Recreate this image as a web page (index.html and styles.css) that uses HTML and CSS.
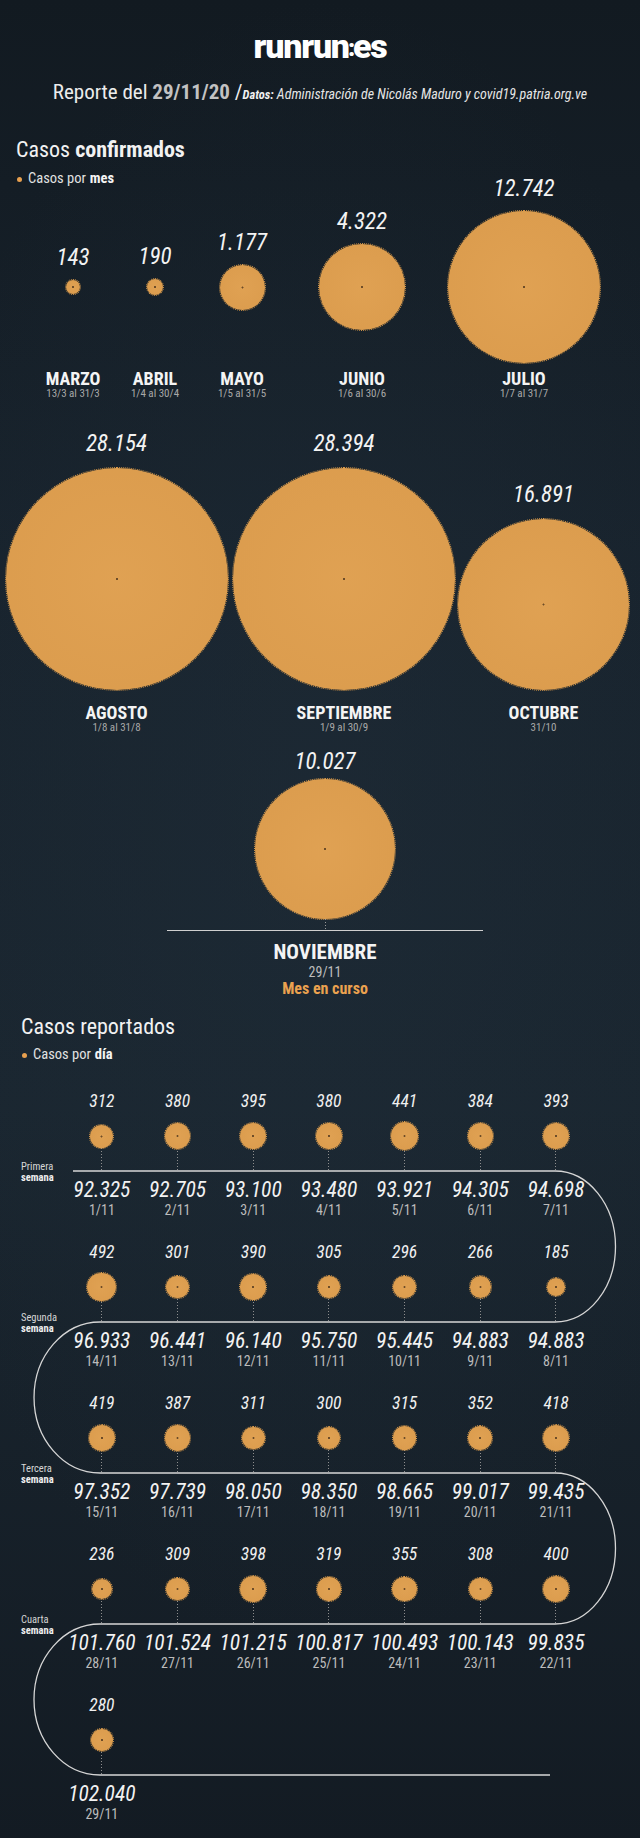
FILE: index.html
```html
<!DOCTYPE html>
<html lang="es">
<head>
<meta charset="utf-8">
<title>Casos confirmados</title>
<link rel="stylesheet" href="styles.css">
</head>
<body>
<header class="top">
  <div class="logo">runrun<span class="colon">:</span>es</div>
  <p class="report">Reporte del <b>29/11/20</b> <span class="slash">/</span><span class="src"><b>Datos:</b> Administración de Nicolás Maduro y covid19.patria.org.ve</span></p>
</header>

<section class="conf">
  <h2 class="h2a">Casos <b>confirmados</b></h2>
  <p class="legend la"><i class="dot"></i>Casos por <b>mes</b></p>

  <div class="mrow r1">
    <div class="mcol"><div class="stage"><span class="num">143</span><span class="circ" style="--d:14px"></span></div><div class="mname">MARZO</div><div class="mdate">13/3 al 31/3</div></div>
    <div class="mcol"><div class="stage"><span class="num">190</span><span class="circ" style="--d:16px"></span></div><div class="mname">ABRIL</div><div class="mdate">1/4 al 30/4</div></div>
    <div class="mcol"><div class="stage"><span class="num">1.177</span><span class="circ" style="--d:45px"></span></div><div class="mname">MAYO</div><div class="mdate">1/5 al 31/5</div></div>
    <div class="mcol"><div class="stage"><span class="num">4.322</span><span class="circ" style="--d:86px"></span></div><div class="mname">JUNIO</div><div class="mdate">1/6 al 30/6</div></div>
    <div class="mcol"><div class="stage"><span class="num">12.742</span><span class="circ" style="--d:152px"></span></div><div class="mname">JULIO</div><div class="mdate">1/7 al 31/7</div></div>
  </div>

  <div class="mrow r2">
    <div class="mcol"><div class="stage"><span class="num">28.154</span><span class="circ" style="--d:222px"></span></div><div class="mname">AGOSTO</div><div class="mdate">1/8 al 31/8</div></div>
    <div class="mcol"><div class="stage"><span class="num">28.394</span><span class="circ" style="--d:222px"></span></div><div class="mname">SEPTIEMBRE</div><div class="mdate">1/9 al 30/9</div></div>
    <div class="mcol"><div class="stage"><span class="num">16.891</span><span class="circ" style="--d:171px"></span></div><div class="mname">OCTUBRE</div><div class="mdate">31/10</div></div>
  </div>

  <div class="nov">
    <span class="num">10.027</span>
    <span class="circ" style="--d:140px"></span>
    <span class="stem"></span>
    <span class="hline"></span>
    <div class="nname">NOVIEMBRE</div>
    <div class="ndate">29/11</div>
    <div class="ncur">Mes en curso</div>
  </div>
</section>

<section class="rep">
  <h2 class="h2b">Casos reportados</h2>
  <p class="legend lb"><i class="dot"></i>Casos por <b>día</b></p>

  <div class="days">
    <svg class="track" width="640" height="760" viewBox="0 0 640 760" aria-hidden="true">
      <path d="M73 89 H555 A60.5 75.5 0 0 1 555 240 H100 A66 75.5 0 0 0 100 391 H555 A60.5 75.5 0 0 1 555 542 H100 A66 75.5 0 0 0 100 693 H550" />
    </svg>

    <div class="week">
      <div class="wlabel">Primera<br><b>semana</b></div>
      <div class="day"><span class="dnum">312</span><div class="dstage"><div class="cbox"><span class="circ" style="--d:23px"></span></div></div><span class="dval">92.325</span><span class="ddate">1/11</span></div>
      <div class="day"><span class="dnum">380</span><div class="dstage"><div class="cbox"><span class="circ" style="--d:25.3px"></span></div></div><span class="dval">92.705</span><span class="ddate">2/11</span></div>
      <div class="day"><span class="dnum">395</span><div class="dstage"><div class="cbox"><span class="circ" style="--d:25.8px"></span></div></div><span class="dval">93.100</span><span class="ddate">3/11</span></div>
      <div class="day"><span class="dnum">380</span><div class="dstage"><div class="cbox"><span class="circ" style="--d:25.3px"></span></div></div><span class="dval">93.480</span><span class="ddate">4/11</span></div>
      <div class="day"><span class="dnum">441</span><div class="dstage"><div class="cbox"><span class="circ" style="--d:27.3px"></span></div></div><span class="dval">93.921</span><span class="ddate">5/11</span></div>
      <div class="day"><span class="dnum">384</span><div class="dstage"><div class="cbox"><span class="circ" style="--d:25.5px"></span></div></div><span class="dval">94.305</span><span class="ddate">6/11</span></div>
      <div class="day"><span class="dnum">393</span><div class="dstage"><div class="cbox"><span class="circ" style="--d:25.8px"></span></div></div><span class="dval">94.698</span><span class="ddate">7/11</span></div>
    </div>

    <div class="week">
      <div class="wlabel">Segunda<br><b>semana</b></div>
      <div class="day"><span class="dnum">492</span><div class="dstage"><div class="cbox"><span class="circ" style="--d:28.8px"></span></div></div><span class="dval">96.933</span><span class="ddate">14/11</span></div>
      <div class="day"><span class="dnum">301</span><div class="dstage"><div class="cbox"><span class="circ" style="--d:22.6px"></span></div></div><span class="dval">96.441</span><span class="ddate">13/11</span></div>
      <div class="day"><span class="dnum">390</span><div class="dstage"><div class="cbox"><span class="circ" style="--d:25.7px"></span></div></div><span class="dval">96.140</span><span class="ddate">12/11</span></div>
      <div class="day"><span class="dnum">305</span><div class="dstage"><div class="cbox"><span class="circ" style="--d:22.7px"></span></div></div><span class="dval">95.750</span><span class="ddate">11/11</span></div>
      <div class="day"><span class="dnum">296</span><div class="dstage"><div class="cbox"><span class="circ" style="--d:22.4px"></span></div></div><span class="dval">95.445</span><span class="ddate">10/11</span></div>
      <div class="day"><span class="dnum">266</span><div class="dstage"><div class="cbox"><span class="circ" style="--d:21.2px"></span></div></div><span class="dval">94.883</span><span class="ddate">9/11</span></div>
      <div class="day"><span class="dnum">185</span><div class="dstage"><div class="cbox"><span class="circ" style="--d:17.7px"></span></div></div><span class="dval">94.883</span><span class="ddate">8/11</span></div>
    </div>

    <div class="week">
      <div class="wlabel">Tercera<br><b>semana</b></div>
      <div class="day"><span class="dnum">419</span><div class="dstage"><div class="cbox"><span class="circ" style="--d:26.6px"></span></div></div><span class="dval">97.352</span><span class="ddate">15/11</span></div>
      <div class="day"><span class="dnum">387</span><div class="dstage"><div class="cbox"><span class="circ" style="--d:25.6px"></span></div></div><span class="dval">97.739</span><span class="ddate">16/11</span></div>
      <div class="day"><span class="dnum">311</span><div class="dstage"><div class="cbox"><span class="circ" style="--d:22.9px"></span></div></div><span class="dval">98.050</span><span class="ddate">17/11</span></div>
      <div class="day"><span class="dnum">300</span><div class="dstage"><div class="cbox"><span class="circ" style="--d:22.5px"></span></div></div><span class="dval">98.350</span><span class="ddate">18/11</span></div>
      <div class="day"><span class="dnum">315</span><div class="dstage"><div class="cbox"><span class="circ" style="--d:23.1px"></span></div></div><span class="dval">98.665</span><span class="ddate">19/11</span></div>
      <div class="day"><span class="dnum">352</span><div class="dstage"><div class="cbox"><span class="circ" style="--d:24.4px"></span></div></div><span class="dval">99.017</span><span class="ddate">20/11</span></div>
      <div class="day"><span class="dnum">418</span><div class="dstage"><div class="cbox"><span class="circ" style="--d:26.6px"></span></div></div><span class="dval">99.435</span><span class="ddate">21/11</span></div>
    </div>

    <div class="week">
      <div class="wlabel">Cuarta<br><b>semana</b></div>
      <div class="day"><span class="dnum">236</span><div class="dstage"><div class="cbox"><span class="circ" style="--d:20px"></span></div></div><span class="dval">101.760</span><span class="ddate">28/11</span></div>
      <div class="day"><span class="dnum">309</span><div class="dstage"><div class="cbox"><span class="circ" style="--d:22.9px"></span></div></div><span class="dval">101.524</span><span class="ddate">27/11</span></div>
      <div class="day"><span class="dnum">398</span><div class="dstage"><div class="cbox"><span class="circ" style="--d:25.9px"></span></div></div><span class="dval">101.215</span><span class="ddate">26/11</span></div>
      <div class="day"><span class="dnum">319</span><div class="dstage"><div class="cbox"><span class="circ" style="--d:23.2px"></span></div></div><span class="dval">100.817</span><span class="ddate">25/11</span></div>
      <div class="day"><span class="dnum">355</span><div class="dstage"><div class="cbox"><span class="circ" style="--d:24.5px"></span></div></div><span class="dval">100.493</span><span class="ddate">24/11</span></div>
      <div class="day"><span class="dnum">308</span><div class="dstage"><div class="cbox"><span class="circ" style="--d:22.8px"></span></div></div><span class="dval">100.143</span><span class="ddate">23/11</span></div>
      <div class="day"><span class="dnum">400</span><div class="dstage"><div class="cbox"><span class="circ" style="--d:26px"></span></div></div><span class="dval">99.835</span><span class="ddate">22/11</span></div>
    </div>

    <div class="week">
      <div class="day"><span class="dnum">280</span><div class="dstage"><div class="cbox"><span class="circ" style="--d:21.8px"></span></div></div><span class="dval">102.040</span><span class="ddate">29/11</span></div>
    </div>
  </div>
</section>
</body>
</html>
```
FILE: styles.css
```css
* { box-sizing: border-box; margin: 0; padding: 0; }

html, body { width: 640px; }

body {
  min-height: 1838px;
  background-color: #17222b;
  background-image:
    radial-gradient(ellipse 70% 45% at 50% 45%, rgba(32, 46, 58, 0.45) 0%, rgba(23, 34, 43, 0) 100%),
    linear-gradient(180deg, #121a21 0%, #18232d 30%, #1a2630 60%, #131b23 100%);
  color: #f1f1f1;
  font-family: "Roboto Condensed", "Liberation Sans Narrow", "Arial Narrow", Roboto, sans-serif;
}

/* ---------- header ---------- */
.top { padding-top: 31px; text-align: center; }

.logo {
  font-family: Roboto, "Liberation Sans", sans-serif;
  font-weight: 900;
  font-size: 34px;
  line-height: 30px;
  letter-spacing: -1.2px;
  color: #ffffff;
}
.logo .colon { margin: 0 -1px 0 -1px; font-size: 24px; vertical-align: 2px; }

.report {
  margin-top: 17px;
  font-size: 21px;
  line-height: 24px;
  color: #ececec;
  white-space: nowrap;
}
.report b { color: #c2c2c2; font-weight: 700; }
.report .slash { color: #f0f0f0; }
.report .src { font-style: italic; font-size: 14px; color: #e6e6e6; }
.report .src b { color: #f0f0f0; font-size: 12.5px; }

/* ---------- headings ---------- */
h2 {
  font-size: 22px;
  line-height: 26px;
  font-weight: 400;
  color: #f2f2f2;
}
h2 b { font-weight: 700; }
.h2a { margin-top: 30px; padding-left: 16px; }
.h2b { margin-top: 16px; padding-left: 21px; }

.legend {
  font-size: 14.5px;
  line-height: 18px;
  color: #e2e2e2;
  display: flex;
  align-items: center;
}
.legend b { font-weight: 700; color: #f4f4f4; margin-left: 4px; }
.legend .dot {
  width: 5px; height: 5px; border-radius: 50%;
  background: #e8a04f;
  margin-right: 6px;
}
.la { margin-top: 7px; padding-left: 17px; }
.lb { margin-top: 6px; padding-left: 22px; }

/* ---------- bubbles ---------- */
.circ {
  display: block;
  flex-shrink: 0;
  width: var(--d);
  height: var(--d);
  border-radius: 50%;
  background-color: #dc9d4e;
  background-image:
    radial-gradient(circle, rgba(60, 40, 22, 0.7) 0 0.7px, rgba(0, 0, 0, 0) 1.3px),
    radial-gradient(circle, rgba(226, 164, 86, 0.6) 0%, rgba(216, 152, 74, 0.4) 100%);
  outline: 1px dotted #d99a4b;
  outline-offset: 0;
}

.num {
  display: block;
  flex-shrink: 0;
  font-size: 23px;
  line-height: 22px;
  font-style: italic;
  font-weight: 400;
  color: #f3f3f3;
  white-space: nowrap;
}

/* ---------- months ---------- */
.mrow { display: flex; }
.mcol { display: flex; flex-direction: column; align-items: center; flex-shrink: 0; }

.stage {
  display: flex;
  flex-direction: column;
  align-items: center;
  width: 100%;
}
.stage .num { margin-bottom: 11px; }

.r1 { margin-top: 16px; padding-left: 33px; }
.r1 .stage { height: 166px; justify-content: center; }
.r1 .stage::after { content: ""; display: block; flex-shrink: 0; height: 33px; }
.r1 .mcol:nth-child(1) { width: 80px; }
.r1 .mcol:nth-child(2) { width: 84px; }
.r1 .mcol:nth-child(3) { width: 90px; }
.r1 .mcol:nth-child(4) { width: 150px; }
.r1 .mcol:nth-child(5) { width: 174px; }

.r2 { margin-top: 22px; padding-left: 5px; }
.r2 .stage { height: 268px; justify-content: flex-end; }
.r2 .stage .num { margin-bottom: 13px; }
.r2 .mcol:nth-child(1) { width: 223px; }
.r2 .mcol:nth-child(2) { width: 222px; margin-left: 5px; }
.r2 .mcol:nth-child(3) { width: 171px; margin-left: 3px; }
.r2 .mname { margin-top: 14px; }

.mname {
  font-size: 18px;
  line-height: 18px;
  font-weight: 700;
  color: #f4f4f4;
  white-space: nowrap;
}
.mdate {
  font-size: 11px;
  line-height: 12px;
  color: #a8a8a8;
  white-space: nowrap;
}

/* ---------- noviembre ---------- */
.nov {
  margin-top: 17px;
  padding-left: 10px;
  display: flex;
  flex-direction: column;
  align-items: center;
}
.nov .num { margin-bottom: 6px; }
.stem {
  display: block;
  width: 1px;
  height: 11px;
  background: repeating-linear-gradient(180deg, #9a9a9a 0 1px, transparent 1px 3px);
}
.hline { display: block; width: 316px; height: 1px; background: #cfcfcf; }
.nname {
  margin-top: 10px;
  font-size: 21px;
  line-height: 22px;
  font-weight: 700;
  color: #f4f4f4;
}
.ndate {
  margin-top: 1px;
  font-size: 14px;
  line-height: 16px;
  color: #bdbdbd;
}
.ncur {
  font-size: 16px;
  line-height: 18px;
  font-weight: 700;
  color: #eba24f;
}

/* ---------- daily ---------- */
.days {
  position: relative;
  margin-top: 18px;
  padding-top: 9px;
}
.track {
  position: absolute;
  left: 0;
  top: 0;
  pointer-events: none;
}
.track path {
  fill: none;
  stroke: #d6d6d6;
  stroke-width: 1.3;
}

.week {
  display: grid;
  grid-template-columns: 64px repeat(7, 75.7px);
  margin-bottom: 24.5px;
}
.wlabel {
  grid-column: 1;
  grid-row: 1;
  align-self: start;
  margin-top: 70px;
  padding-left: 21px;
  font-size: 10.5px;
  line-height: 11px;
  color: #d6d6d6;
}
.wlabel b { font-weight: 700; color: #eeeeee; }

.day {
  grid-row: 1;
  display: flex;
  flex-direction: column;
  align-items: center;
  height: 126.5px;
}
.week .day:nth-child(2) { grid-column: 2; }
.week .day:nth-child(3) { grid-column: 3; }
.week .day:nth-child(4) { grid-column: 4; }
.week .day:nth-child(5) { grid-column: 5; }
.week .day:nth-child(6) { grid-column: 6; }
.week .day:nth-child(7) { grid-column: 7; }
.week .day:nth-child(8) { grid-column: 8; }
.week .day:only-child { grid-column: 2; }

.dnum {
  font-size: 17.5px;
  line-height: 20px;
  font-style: italic;
  color: #f0f0f0;
}
.dstage {
  width: 100%;
  height: 60px;
  background-image: repeating-linear-gradient(180deg, #8e8e8e 0 1px, transparent 1px 3px);
  background-size: 1px 35px;
  background-position: center bottom;
  background-repeat: no-repeat;
}
.cbox {
  height: 50px;
  display: flex;
  align-items: center;
  justify-content: center;
}
.dval {
  margin-top: 6.5px;
  font-size: 21.5px;
  line-height: 24px;
  font-style: italic;
  color: #f2f2f2;
  white-space: nowrap;
}
.ddate {
  font-size: 14px;
  line-height: 16px;
  color: #bcbcbc;
  white-space: nowrap;
}
```
